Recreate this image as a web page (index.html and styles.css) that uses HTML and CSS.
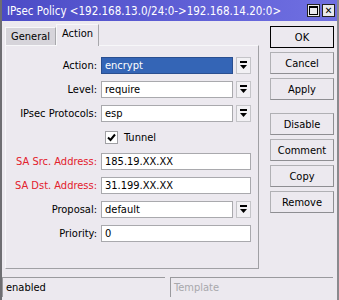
FILE: index.html
```html
<!DOCTYPE html>
<html lang="en">
<head>
    <meta charset="UTF-8">
    <title>IPsec Policy</title>
    <link rel="stylesheet" href="styles.css">
</head>
<body>
    <div class="window">
        <div class="titlebar">
            <span class="title">IPsec Policy &lt;192.168.13.0/24:0-&gt;192.168.14.20:0&gt;</span>
            <span class="tb-btn"><span class="max-box"></span></span>
            <span class="tb-btn close">&#x2715;</span>
        </div>
        <div class="content">
            <div class="main">
                <div class="tabs">
                    <div class="tab">General</div>
                    <div class="tab active">Action</div>
                </div>
                <div class="panel">
                    <!-- Action -->
                    <div class="row">
                        <label>Action:</label>
                        <div class="field selected">encrypt</div>
                        <div class="drop"><svg width="9" height="9" viewBox="0 0 9 9"><rect x="1" y="0" width="7" height="2" fill="#000"/><path d="M1 4 H8 L4.5 8 Z" fill="#000"/></svg></div>
                    </div>
                    <!-- Level -->
                    <div class="row">
                        <label>Level:</label>
                        <div class="field">require</div>
                        <div class="drop"><svg width="9" height="9" viewBox="0 0 9 9"><rect x="1" y="0" width="7" height="2" fill="#000"/><path d="M1 4 H8 L4.5 8 Z" fill="#000"/></svg></div>
                    </div>
                    <!-- Protocols -->
                    <div class="row">
                        <label>IPsec Protocols:</label>
                        <div class="field">esp</div>
                        <div class="drop"><svg width="9" height="9" viewBox="0 0 9 9"><rect x="1" y="0" width="7" height="2" fill="#000"/><path d="M1 4 H8 L4.5 8 Z" fill="#000"/></svg></div>
                    </div>
                    <!-- Tunnel -->
                    <div class="row">
                        <label></label>
                        <div class="check"><svg width="11" height="11" viewBox="0 0 11 11"><path d="M2 5.5 L4.5 8 L9 2.5" fill="none" stroke="#000" stroke-width="2"/></svg></div>
                        <span class="check-label">Tunnel</span>
                    </div>
                    <div class="row">
                        <label class="red">SA Src. Address:</label>
                        <div class="field wide">185.19.XX.XX</div>
                    </div>
                    <div class="row">
                        <label class="red">SA Dst. Address:</label>
                        <div class="field wide">31.199.XX.XX</div>
                    </div>
                    <div class="row">
                        <label>Proposal:</label>
                        <div class="field">default</div>
                        <div class="drop"><svg width="9" height="9" viewBox="0 0 9 9"><rect x="1" y="0" width="7" height="2" fill="#000"/><path d="M1 4 H8 L4.5 8 Z" fill="#000"/></svg></div>
                    </div>
                    <div class="row">
                        <label>Priority:</label>
                        <div class="field wide">0</div>
                    </div>
                </div>
            </div>
            <div class="side">
                <button class="btn default">OK</button>
                <button class="btn">Cancel</button>
                <button class="btn">Apply</button>
                <button class="btn spaced">Disable</button>
                <button class="btn">Comment</button>
                <button class="btn">Copy</button>
                <button class="btn">Remove</button>
            </div>
        </div>
        <div class="status">
            <div class="stat">enabled</div>
            <div class="stat muted">Template</div>
        </div>
    </div>
</body>
</html>
```

FILE: styles.css
```css
/* General styles */
body {
    margin: 0;
    padding: 0;
    font-family: "DejaVu Sans Condensed", "DejaVu Sans", sans-serif;
    font-size: 11px;
    color: #000;
}
.window {
    width: 339px;
    height: 300px;
    box-sizing: border-box;
    background-color: #ece9ef;
    border-left: 2px solid #6e6e72;
    border-right: 2px solid #8a8a8e;
    overflow: hidden;
}
/* Title bar */
.titlebar {
    height: 21px;
    margin: 0 -2px;
    padding: 0 4px 0 7px;
    display: flex;
    align-items: center;
    background: linear-gradient(to right, #4b4bc6, #7070e2);
    color: white;
}
.title {
    flex: 1;
    font-size: 11.5px;
    white-space: nowrap;
}
.tb-btn {
    width: 13px;
    height: 13px;
    margin-left: 2px;
    box-sizing: border-box;
    border: 1px solid #222;
    background-color: #e8e8ec;
    display: flex;
    align-items: center;
    justify-content: center;
    color: #000;
}
.max-box {
    width: 7px;
    height: 6px;
    border: 1px solid #000;
    border-top-width: 2px;
}
.close {
    font-size: 10px;
    font-weight: bold;
    line-height: 1;
}
/* Main area */
.content {
    display: flex;
    padding: 3px 0 0 3px;
}
.main {
    width: 254px;
}
.tabs {
    display: flex;
    align-items: flex-end;
    height: 21px;
}
.tab {
    height: 17px;
    padding: 0 5px;
    line-height: 17px;
    background-color: #d6d4da;
    border-top: 1px solid #f7f7f9;
    border-left: 1px solid #f7f7f9;
    border-right: 1px solid #a8a8ac;
}
.tab.active {
    height: 21px;
    line-height: 18px;
    background-color: #ece9ef;
    margin-bottom: -1px;
    position: relative;
}
.panel {
    height: 224px;
    box-sizing: border-box;
    border-top: 1px solid #f7f7f9;
    border-left: 1px solid #f7f7f9;
    border-right: 1px solid #a0a0a4;
    border-bottom: 1px solid #a0a0a4;
    padding-top: 11px;
}
.row {
    display: flex;
    align-items: center;
    height: 17px;
    margin-bottom: 7px;
}
.row label {
    width: 91px;
    padding-right: 4px;
    text-align: right;
}
.row label.red {
    color: #e3202b;
}
.field {
    width: 132px;
    height: 17px;
    box-sizing: border-box;
    padding-left: 3px;
    line-height: 15px;
    background-color: white;
    border: 1px solid #a9a9ad;
}
.field.wide {
    width: 150px;
}
.field.selected {
    background-color: #3465b6;
    color: white;
    border-color: #2a4f90;
}
.drop {
    width: 15px;
    height: 17px;
    box-sizing: border-box;
    margin-left: 3px;
    border: 1px solid #c4c4c8;
    background-color: #f2f1f4;
    display: flex;
    align-items: center;
    justify-content: center;
}
.check {
    width: 13px;
    height: 13px;
    box-sizing: border-box;
    margin-left: 4px;
    border: 1px solid #a0a0a4;
    background-color: white;
    display: flex;
    align-items: center;
    justify-content: center;
}
.check-label {
    margin-left: 6px;
}
/* Button column */
.side {
    display: flex;
    flex-direction: column;
    margin-left: 11px;
    padding-top: 2px;
}
.btn {
    width: 64px;
    height: 22px;
    margin-bottom: 4px;
    font-family: inherit;
    font-size: 11px;
    background-color: #ece9ef;
    border: 1px solid #8e8e92;
    border-top-color: #b0b0b4;
    border-left-color: #b0b0b4;
    padding: 0;
}
.btn.default {
    border: 1px solid #000;
}
.btn.spaced {
    margin-top: 9px;
}
/* Status bar */
.status {
    display: flex;
    gap: 5px;
    padding: 8px 4px 0 0;
}
.stat {
    width: 163px;
    height: 20px;
    box-sizing: border-box;
    padding-left: 3px;
    line-height: 19px;
    border-top: 1px solid #9a9a9e;
    border-left: 1px solid #9a9a9e;
}
.stat.muted {
    color: #a8a8ac;
}
```
